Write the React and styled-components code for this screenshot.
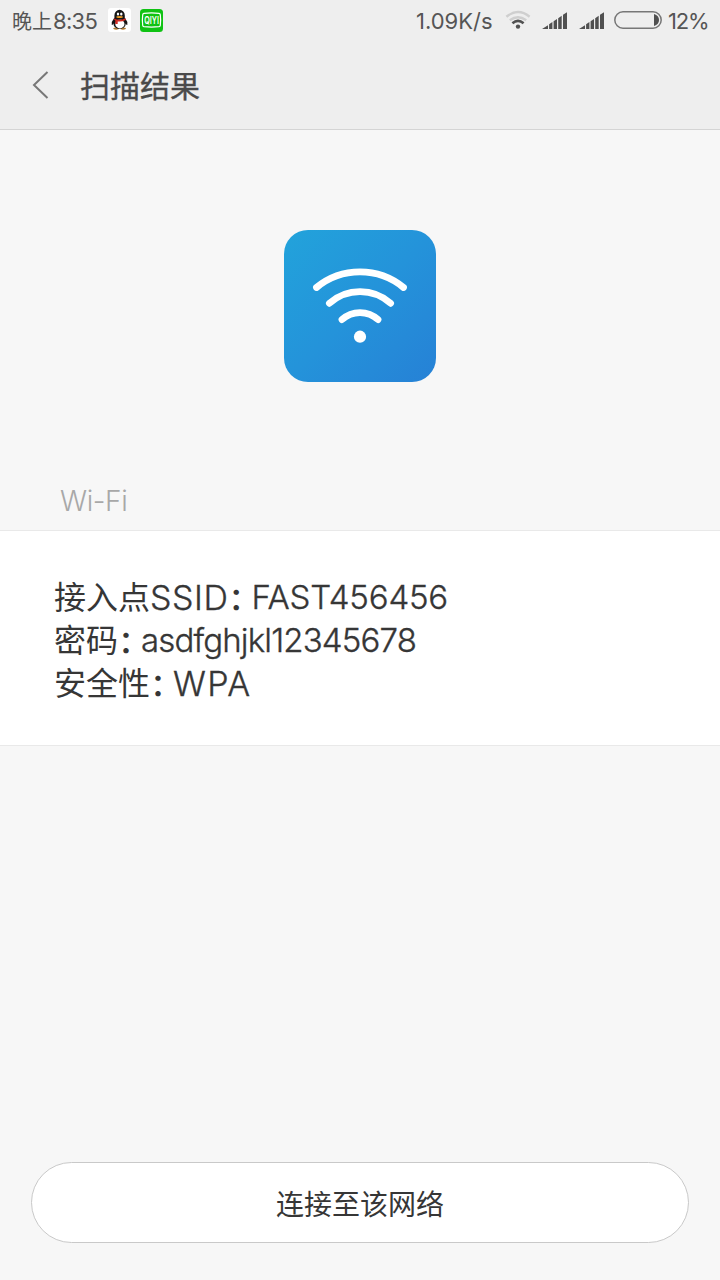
import React from 'react';
import styled, { createGlobalStyle } from 'styled-components';

const GlobalStyle = createGlobalStyle`
  * { box-sizing: border-box; }
  body {
    margin: 0;
    background: #f7f7f7;
    font-family: Inter, "Noto Sans CJK SC", sans-serif;
  }
`;

const Screen = styled.main`
  display: flex;
  flex-direction: column;
  width: 720px;
  height: 1280px;
  background: #f7f7f7;
  color: #363636;
`;

const TopArea = styled.header`
  height: 130px;
  background: #eeeeee;
  border-bottom: 1px solid #d4d4d4;
`;

const StatusBar = styled.div`
  display: flex;
  align-items: center;
  height: 40px;
  padding: 0 12px;
  color: #555;
`;

const StatusText = styled.span`
  width: ${(p) => p.$width}px;
  margin-right: ${(p) => p.$gap || 0}px;
  padding-top: ${(p) => p.$drop || 2}px;
  font-size: ${(p) => p.$size || 22}px;
  letter-spacing: ${(p) => p.$track || 0}px;
  line-height: 40px;
  white-space: nowrap;
`;

const StatusIcon = styled.svg`
  flex: none;
  display: block;
  margin-right: ${(p) => p.$gap || 0}px;
`;

const Spacer = styled.div`
  flex: 1;
`;

const TitleBar = styled.div`
  display: flex;
  align-items: center;
  height: 90px;
  padding-left: 32px;
`;

const BackIcon = styled.svg`
  display: block;
  margin-right: 31px;
`;

const Title = styled.h1`
  margin: 2px 0 0;
  font-size: 30px;
  font-weight: 400;
  -webkit-text-stroke: 0.35px #4a4a4a;
  line-height: 44px;
  color: #4a4a4a;
`;

const Hero = styled.section`
  display: flex;
  justify-content: center;
  height: 341px;
  padding-top: 100px;
`;

const WifiTile = styled.div`
  width: 152px;
  height: 152px;
  border-radius: 24px;
  background: linear-gradient(135deg, #22a3db 0%, #2493da 50%, #2681d6 100%);
`;

const SectionLabel = styled.h2`
  height: 59px;
  margin: 0;
  padding-left: 60px;
  font-size: 28px;
  font-weight: 300;
  letter-spacing: -0.4px;
  line-height: 60px;
  color: #a8a8a8;
`;

const Details = styled.section`
  height: 216px;
  padding: 45px 54px 0;
  background: #fff;
  border-top: 1px solid #e9e9e9;
  border-bottom: 1px solid #e9e9e9;
`;

const DetailRow = styled.div`
  display: flex;
  height: 43px;
  line-height: 43px;
  white-space: nowrap;
`;

const Han = styled.span`
  height: 38px;
  font-family: "Noto Sans CJK SC", sans-serif;
  font-size: 32px;
  line-height: 38px;
`;

const Latin = styled.span`
  font-size: ${(p) => p.$size || 33}px;
  font-weight: 300;
  -webkit-text-stroke: 0.35px #363636;
  letter-spacing: ${(p) => p.$track || 0}px;
`;

const Colon = styled.span`
  height: 40px;
  font-family: "Noto Sans CJK SC", sans-serif;
  font-size: 32px;
  font-weight: 500;
  line-height: 40px;
  letter-spacing: -9px;
`;

const Footer = styled.footer`
  margin-top: auto;
  padding: 0 31px 37px;
`;

const ConnectButton = styled.button`
  display: block;
  width: 100%;
  height: 81px;
  padding: 1px 0 0;
  border: 1px solid #c9c9c9;
  border-radius: 41px;
  background: #fff;
  color: #363636;
  font-family: "Noto Sans CJK SC", sans-serif;
  font-size: 28px;
  line-height: 78px;
`;

function QqIcon() {
  return (
    <StatusIcon width="23" height="24" viewBox="0 0 23 24" $gap={9}>
      <rect width="23" height="24" rx="3" fill="#fff" />
      <ellipse cx="8.2" cy="20.6" rx="3" ry="1.1" fill="#b07a30" />
      <ellipse cx="15" cy="20.6" rx="3" ry="1.1" fill="#b07a30" />
      <path d="M6.2 10 Q3.2 13.5 3.8 17 Q5 17 6 15 L17 15 Q18.2 17 19.3 17 Q20 13.5 17 10Z" fill="#151515" />
      <ellipse cx="11.6" cy="15.5" rx="6.2" ry="5.4" fill="#151515" />
      <ellipse cx="11.9" cy="16" rx="4.6" ry="4.4" fill="#fff" />
      <path d="M6.4 10 V7.5 A5.2 5.7 0 0 1 16.8 7.5 V10 Q11.6 13 6.4 10Z" fill="#151515" />
      <ellipse cx="10" cy="6" rx="1.2" ry="1.6" fill="#fff" />
      <ellipse cx="13.3" cy="6" rx="1.2" ry="1.6" fill="#fff" />
      <ellipse cx="11.6" cy="9" rx="3.3" ry="1" fill="#e89b25" />
      <path d="M5.8 10.2 Q11.6 13.2 17.4 10.2 L17.8 12 Q13.5 14 9.7 13.4 V16 H7.3 V12.6 Q6 12.2 5.8 10.2Z" fill="#d22a22" />
    </StatusIcon>
  );
}

function VideoAppIcon() {
  return (
    <StatusIcon width="23" height="23" viewBox="0 0 23 23">
      <rect width="23" height="23" rx="3.5" fill="#0fc213" />
      <path d="M4 4.4 Q11.5 3.4 19 4.4 Q20.1 4.6 20.3 5.8 Q21 11.2 20.3 16.4 Q20.1 17.5 19 17.7 Q11.5 18.6 4 17.7 Q2.9 17.5 2.7 16.4 Q2 11.2 2.7 5.8 Q2.9 4.6 4 4.4Z" fill="none" stroke="#fff" strokeWidth="1.2" />
      <g transform="translate(11.6 14.8) scale(.72 1)">
        <text textAnchor="middle" fill="#fff" fontFamily="Inter, sans-serif" fontSize="10" fontWeight="600">QIYI</text>
      </g>
    </StatusIcon>
  );
}

function StatusWifi() {
  return (
    <StatusIcon width="26" height="20" viewBox="0 0 26 20" $gap={11}>
      <path d="M1.4 6.8 Q13 -2.6 24.6 6.8" fill="none" stroke="#cfcfcf" strokeWidth="2.4" />
      <path d="M4.8 10.3 Q13 4 21.2 10.3" fill="none" stroke="#cfcfcf" strokeWidth="2.4" />
      <path d="M7.4 13.2 Q13 8.6 18.6 13.2" fill="none" stroke="#505050" strokeWidth="2.6" />
      <circle cx="13" cy="16.6" r="2.2" fill="#505050" />
    </StatusIcon>
  );
}

function Signal({ gap }) {
  return (
    <StatusIcon width="26" height="17" viewBox="0 0 26 17" $gap={gap}>
      <path d="M0 17 L6 13.2 V17Z M7.1 12.3 L10.4 10.1 V17 H7.1Z M11.6 9.2 L15 7 V17 H11.6Z M16.2 6.2 L19.7 3.8 V17 H16.2Z M21 2.8 L25 .3 V17 H21Z" fill="#505050" />
    </StatusIcon>
  );
}

function Battery() {
  return (
    <StatusIcon width="48" height="18" viewBox="0 0 48 18" $gap={6}>
      <rect x=".8" y=".8" width="46.4" height="16.4" rx="8.2" fill="none" stroke="#777" strokeWidth="1.5" />
      <path d="M40 3 Q45 4.5 45 9 Q45 13.5 40 15Z" fill="#505050" />
    </StatusIcon>
  );
}

export default function App() {
  return (
    <>
      <GlobalStyle />
      <Screen>
        <TopArea>
          <StatusBar>
            <StatusText $width={41} $size={20} $drop={3}>晚上</StatusText>
            <StatusText $width={45} $gap={10} $track={-0.7}>8:35</StatusText>
            <QqIcon />
            <VideoAppIcon />
            <Spacer />
            <StatusText $width={77} $gap={12}>1.09K/s</StatusText>
            <StatusWifi />
            <Signal gap={11} />
            <Signal gap={9} />
            <Battery />
            <StatusText $width={40} $track={-1.2}>12%</StatusText>
          </StatusBar>
          <TitleBar>
            <BackIcon width="17" height="28" viewBox="0 0 17 28">
              <path d="M15.5 1 L2 14 L15.5 27" fill="none" stroke="#777" strokeWidth="2" />
            </BackIcon>
            <Title>扫描结果</Title>
          </TitleBar>
        </TopArea>
        <Hero>
          <WifiTile>
            <svg width="152" height="152" viewBox="0 0 152 152">
              <g fill="none" stroke="#fff" strokeWidth="6.8" strokeLinecap="round">
                <path d="M32.5 57.5 A68.7 68.7 0 0 1 119.5 57.5" />
                <path d="M45.4 73.3 A46.2 46.2 0 0 1 106.6 73.3" />
                <path d="M58 89.6 A26.6 26.6 0 0 1 94 89.6" />
              </g>
              <circle cx="76" cy="106.7" r="6.1" fill="#fff" />
            </svg>
          </WifiTile>
        </Hero>
        <SectionLabel>Wi-Fi</SectionLabel>
        <Details>
          <DetailRow>
            <Han>接入点</Han><Latin $size={34} $track={0.5}>SSID</Latin><Colon>：</Colon><Latin $track={-0.2}>FAST456456</Latin>
          </DetailRow>
          <DetailRow>
            <Han>密码</Han><Colon>：</Colon><Latin $track={-0.85}>asdfghjkl12345678</Latin>
          </DetailRow>
          <DetailRow>
            <Han>安全性</Han><Colon>：</Colon><Latin $size={34} $track={1.3}>WPA</Latin>
          </DetailRow>
        </Details>
        <Footer>
          <ConnectButton type="button">连接至该网络</ConnectButton>
        </Footer>
      </Screen>
    </>
  );
}
